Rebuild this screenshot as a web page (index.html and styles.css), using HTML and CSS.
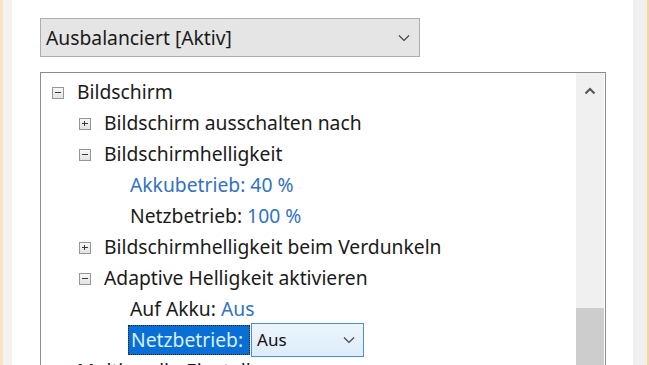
FILE: index.html
```html
<!DOCTYPE html>
<html>
<head>
  <meta charset="UTF-8">
  <link rel="stylesheet" href="styles.css">
</head>
<body>
  <div class="window">
    <div class="edge-left"></div>
    <div class="content">
      <div class="plan-select">
        <span>Ausbalanciert [Aktiv]</span>
        <svg class="chevron" width="12" height="8" viewBox="0 0 12 8"><path d="M1 1.5 L6 6.5 L11 1.5" fill="none" stroke="#444" stroke-width="1.2"/></svg>
      </div>

      <div class="tree-box">
        <ul class="tree">
          <li class="row lvl0"><span class="exp minus"></span>Bildschirm</li>
          <li class="row lvl1"><span class="exp plus"></span>Bildschirm ausschalten nach</li>
          <li class="row lvl1"><span class="exp minus"></span>Bildschirmhelligkeit</li>
          <li class="row lvl2"><span class="val">Akkubetrieb: 40 %</span></li>
          <li class="row lvl2">Netzbetrieb:&nbsp; <span class="val">100 %</span></li>
          <li class="row lvl1"><span class="exp plus"></span>Bildschirmhelligkeit beim Verdunkeln</li>
          <li class="row lvl1"><span class="exp minus"></span>Adaptive Helligkeit aktivieren</li>
          <li class="row lvl2">Auf Akku:&nbsp; <span class="val">Aus</span></li>
          <li class="row lvl2 editing">
            <span class="selected">Netzbetrieb:</span>
            <span class="inline-select">
              <span>Aus</span>
              <svg class="chevron" width="12" height="8" viewBox="0 0 12 8"><path d="M1 1.5 L6 6.5 L11 1.5" fill="none" stroke="#444" stroke-width="1.2"/></svg>
            </span>
          </li>
          <li class="row lvl0"><span class="exp plus"></span>Multimedia-Einstellungen</li>
        </ul>
        <div class="scrollbar">
          <svg class="arrow-up" width="12" height="8" viewBox="0 0 12 8"><path d="M1.5 6.5 L6 2 L10.5 6.5" fill="none" stroke="#555" stroke-width="2"/></svg>
          <div class="track"></div>
          <div class="thumb"></div>
        </div>
      </div>
    </div>
    <div class="edge-right"></div>
  </div>
</body>
</html>
```

FILE: styles.css
```css
html, body { margin: 0; height: 100%; overflow: hidden; background: #fff; }
body { font-family: "Noto Sans", "Open Sans", sans-serif; font-size: 19.3px; color: #1a1a1a; }
.window { display: flex; height: 365px; }
.edge-left { width: 3px; background: #fbe1c2; border-right: 9px solid #f3f3f3; }
.edge-right { width: 2px; background: #f6d59a; border-left: 14px solid #f0f0f0; }
.content { flex: 1; padding: 18px 27px 0 28px; display: flex; flex-direction: column; min-width: 0; }

.plan-select { width: 380px; height: 39px; box-sizing: border-box; border: 1px solid #adadad; background: #e5e5e5; display: flex; align-items: center; justify-content: space-between; padding: 0 9px 0 5px; margin-bottom: 15px; }
.plan-select .chevron { margin-top: 1px; }

.tree-box { flex: 1; border: 1px solid #8c8c8c; border-bottom: 0; display: flex; min-height: 0; }
.tree { flex: 1; list-style: none; margin: 0; padding: 3px 0 0 0; }
.row { height: 31px; display: flex; align-items: center; white-space: nowrap; }
.lvl0 { padding-left: 11px; }
.lvl1 { padding-left: 38px; }
.lvl2 { padding-left: 89px; }
.exp { width: 12px; height: 12px; box-sizing: border-box; border: 1px solid #969696; background: linear-gradient(#f7f7f7, #e3e3e3); margin-right: 13px; margin-top: 2px; position: relative; flex: none; }
.exp::before { content: ""; position: absolute; left: 2px; top: 4px; width: 6px; height: 1px; background: #3a3a3a; }
.plus::after { content: ""; position: absolute; left: 4px; top: 2px; width: 1px; height: 5px; background: #3a3a3a; }
.val { color: #3272c0; }

.editing { padding-left: 87px; }
.selected { background: #0a6fd4; color: #d8f0ff; height: 30px; display: flex; align-items: center; padding: 0 7px 0 3px; box-sizing: border-box; outline: 1px dotted #222; outline-offset: -1px; }
.inline-select { width: 113px; height: 34px; box-sizing: border-box; border: 1px solid #4f8fcf; background: linear-gradient(#edf5fc, #dcecfa); display: flex; align-items: center; justify-content: space-between; padding: 0 8px 0 5px; color: #111; font-size: 17px; margin-left: 1px; }

.scrollbar { width: 28px; margin-right: 1px; background: #f0f0f0; display: flex; flex-direction: column; align-items: center; }
.arrow-up { margin-top: 14px; }
.track { height: 213px; }
.thumb { align-self: stretch; flex: 1; background: #cdcdcd; }
```
